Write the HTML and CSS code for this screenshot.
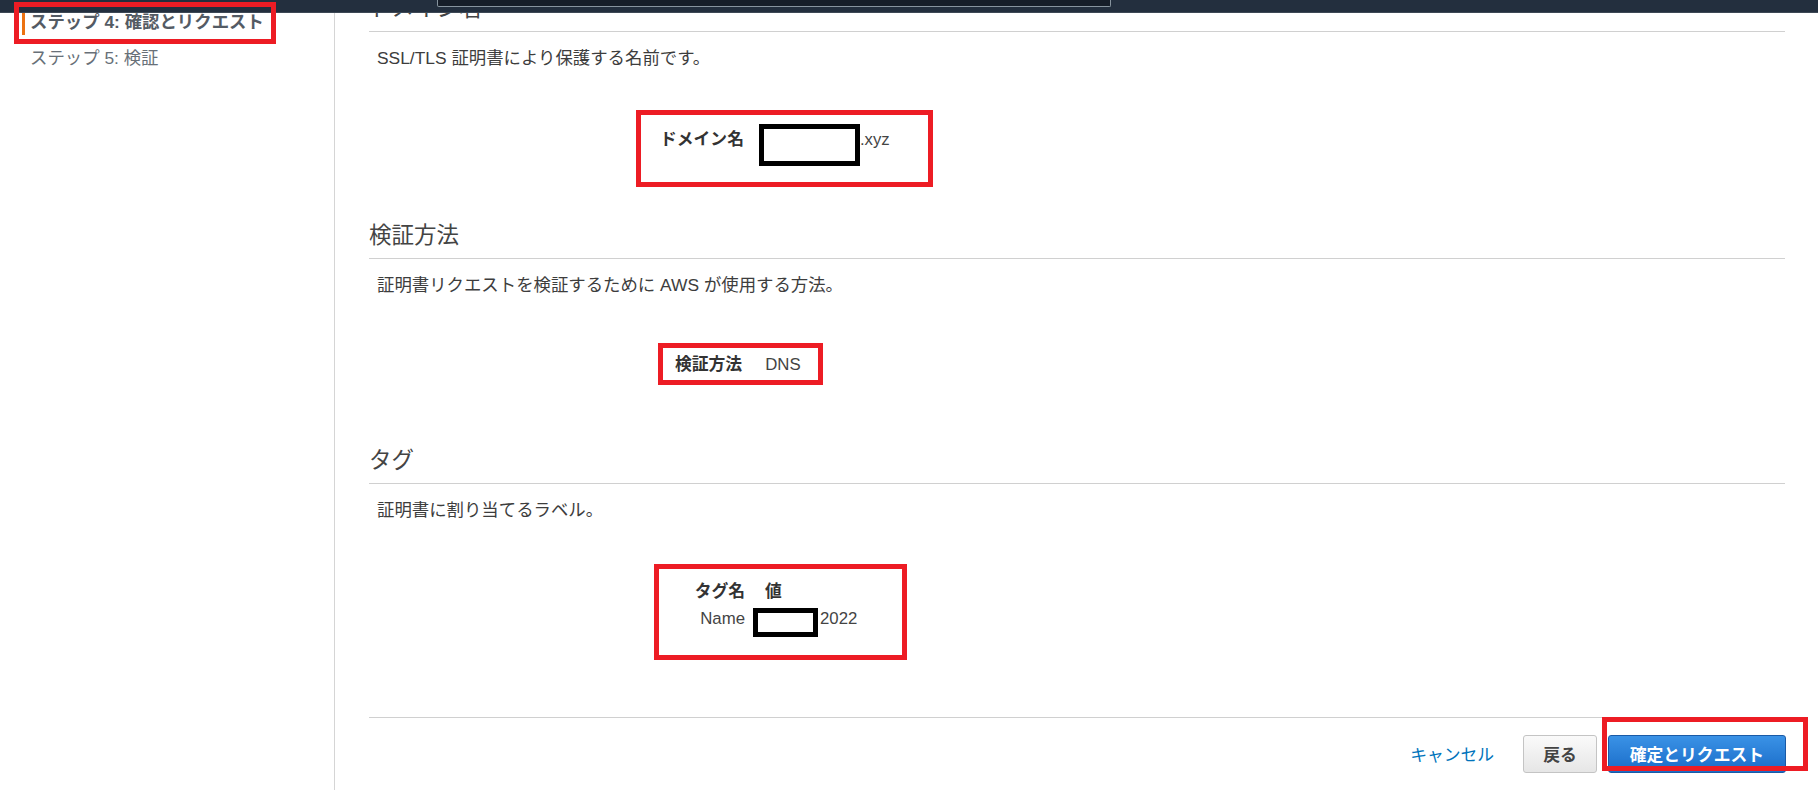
FILE: index.html
```html
<!DOCTYPE html>
<html lang="ja">
  <head>
    <meta charset="UTF-8" />
    <meta name="viewport" content="width=device-width, initial-scale=1.0" />
    <title>証明書のリクエスト - 確認とリクエスト</title>
    <link rel="stylesheet" href="styles.css">
  </head>
  <body>
    <!-- Top navigation bar (stays on top while scrolling) -->
    <div class="topbar">
      <div class="search"></div>
    </div>

    <div class="layout">
      <!-- Wizard steps -->
      <div class="sidebar">
        <div class="step current">
          ステップ 4: 確認とリクエスト
          <span class="mark mark-step"></span>
        </div>
        <div class="step">ステップ 5: 検証</div>
      </div>

      <!-- Review content -->
      <div class="main">
        <div class="section first">
          <h2>ドメイン名</h2>
          <p class="desc">SSL/TLS 証明書により保護する名前です。</p>
          <div class="kv kv-domain">
            <span class="label">ドメイン名</span>
            <span class="redact redact-domain"></span>
            <span class="value">.xyz</span>
            <span class="mark mark-domain"></span>
          </div>
        </div>

        <div class="section">
          <h2>検証方法</h2>
          <p class="desc">証明書リクエストを検証するために AWS が使用する方法。</p>
          <div class="kv kv-method">
            <span class="label">検証方法</span>
            <span class="value">DNS</span>
            <span class="mark mark-method"></span>
          </div>
        </div>

        <div class="section">
          <h2>タグ</h2>
          <p class="desc">証明書に割り当てるラベル。</p>
          <div class="tags">
            <span class="label th-key">タグ名</span>
            <span class="label th-val">値</span>
            <span class="value td-key">Name</span>
            <span class="value td-val"><span class="redact redact-tag"></span>2022</span>
            <span class="mark mark-tags"></span>
          </div>
        </div>

        <!-- Wizard buttons -->
        <div class="footer">
          <a href="#" class="cancel">キャンセル</a>
          <button class="btn btn-back">戻る</button>
          <div class="confirm-wrap">
            <button class="btn btn-primary">確定とリクエスト</button>
            <span class="mark mark-confirm"></span>
          </div>
        </div>
      </div>
    </div>
  </body>
</html>
```

FILE: styles.css
```css
/* Basic Reset */
* {
  margin: 0;
  padding: 0;
  box-sizing: border-box;
}

body {
  font-family: "Liberation Sans", "Noto Sans CJK JP", sans-serif;
  font-size: 16.8px;
  color: #444;
  background-color: #fff;
}

/* Top bar */
.topbar {
  position: fixed;
  top: 0;
  left: 0;
  right: 0;
  height: 13px;
  background-color: #232f3e;
  border-bottom: 1px solid #3d4855;
  z-index: 10;
}

.search {
  margin-left: 437px;
  width: 674px;
  height: 7px;
  background-color: #161e29;
  border: 1px solid #87949e;
  border-top: none;
  border-radius: 0 0 2px 2px;
}

.layout {
  display: flex;
  min-height: 790px;
}

/* Sidebar */
.sidebar {
  width: 335px;
  flex-shrink: 0;
  border-right: 1px solid #d5d5d5;
  padding: 9px 0 0 22px;
  font-size: 17.4px;
}

.step {
  line-height: 26px;
  margin-top: 10px;
  padding-left: 8px;
  color: #687078;
}

.step.current {
  position: relative;
  margin-top: 0;
  padding-left: 5px;
  border-left: 3px solid #ec7211;
  font-weight: bold;
  color: #545b64;
}

/* Red annotation boxes */
.mark {
  position: absolute;
  border: 5px solid #ed1c24;
  z-index: 20;
}

.mark-step {
  left: -11px;
  top: -7px;
  width: 262px;
  height: 42px;
}

/* Main */
.main {
  flex: 1;
  padding: 0 33px 0 34px;
}

.section h2 {
  margin-top: 69px;
  font-size: 22.5px;
  font-weight: normal;
  line-height: 30px;
  padding-bottom: 7px;
  border-bottom: 1px solid #d0d0d0;
  color: #444;
}

.section.first h2 {
  margin-top: -6px;
}

.desc {
  margin-top: 14px;
  padding-left: 8px;
  font-size: 17.4px;
  line-height: 24px;
  color: #3d3d3d;
}

.label {
  font-weight: bold;
  color: #333;
}

.kv {
  position: relative;
  display: flex;
  align-items: center;
  width: fit-content;
  height: 24px;
  margin-top: 58px;
  line-height: 24px;
}

.kv-domain {
  margin-left: 291px;
}

.kv-method {
  margin: 56px 0 0 306px;
  gap: 23px;
}

/* Redaction boxes */
.redact {
  display: inline-block;
  border: 5px solid #000;
  background-color: #fff;
}

.redact-domain {
  width: 101px;
  height: 42px;
  margin: 10px 0 0 15px;
}

.redact-tag {
  width: 65px;
  height: 29px;
  margin: 1px 2px 0 0;
}

.mark-domain {
  left: -24px;
  top: -18px;
  width: 297px;
  height: 77px;
}

.mark-method {
  left: -17px;
  top: -10px;
  width: 165px;
  height: 42px;
}

/* Tags table */
.tags {
  position: relative;
  display: grid;
  grid-template-columns: 51px auto;
  grid-template-rows: 24px 24px;
  column-gap: 8px;
  row-gap: 3px;
  width: fit-content;
  margin: 58px 0 0 325px;
  line-height: 24px;
}

.th-key,
.td-key {
  text-align: right;
}

.th-val {
  padding-left: 12px;
}

.td-val {
  display: flex;
  align-items: flex-start;
}

.mark-tags {
  left: -40px;
  top: -16px;
  width: 253px;
  height: 96px;
}

/* Footer buttons */
.footer {
  display: flex;
  justify-content: flex-end;
  align-items: center;
  margin: 86px -1px 0 0;
  padding-top: 17px;
  border-top: 1px solid #d0d0d0;
}

.cancel {
  margin-right: 29px;
  color: #0073bb;
  text-decoration: none;
}

.btn {
  height: 38px;
  font-family: inherit;
  font-size: 16.8px;
  font-weight: bold;
  border-radius: 3px;
  cursor: pointer;
}

.btn-back {
  padding: 0 19px;
  color: #444;
  background: linear-gradient(#fafafa, #e6e6e6);
  border: 1px solid #c4c4c4;
}

.confirm-wrap {
  position: relative;
  margin-left: 11px;
}

.btn-primary {
  padding: 0 21px;
  color: #fff;
  background: linear-gradient(#3a92e6, #1a6cc8);
  border: 1px solid #1a5aa6;
}

.mark-confirm {
  left: -6px;
  top: -18px;
  width: 206px;
  height: 54px;
}
```
